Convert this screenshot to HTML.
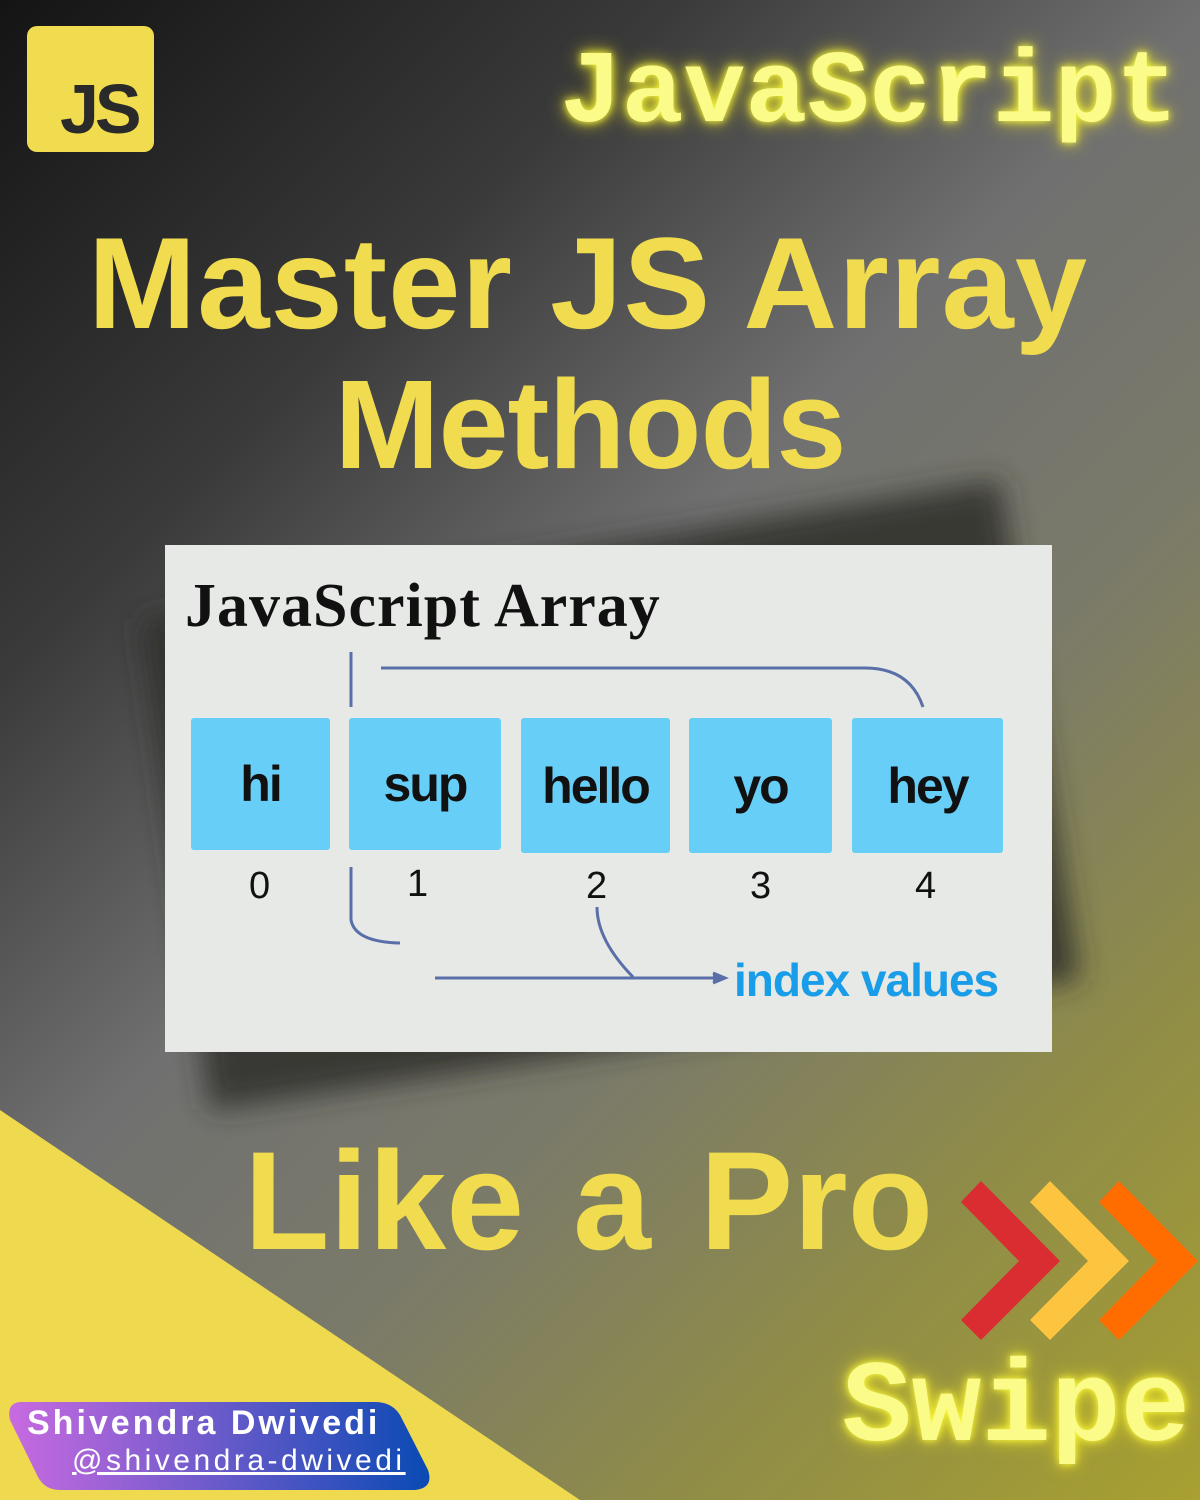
<!DOCTYPE html>
<html><head><meta charset="utf-8"><style>
body{margin:0;width:1200px;height:1500px;overflow:hidden;position:relative;font-family:"Liberation Sans",sans-serif;
background:linear-gradient(135deg,#141414 0%,#3a3a3a 25%,#707070 45%,#7a7a6a 62%,#8f8c48 80%,#a8a030 100%);}
.abs{position:absolute}
.y{color:#f0dc4e;font-weight:bold;letter-spacing:1px}
.glow{color:#fbfb8a;text-shadow:0 0 8px #ffff40,0 0 18px #e8e020;font-family:"Liberation Mono",monospace;font-weight:bold}
.box{position:absolute;background:#67cff7;border-radius:3px;display:flex;align-items:center;justify-content:center;font-weight:bold;font-size:50px;color:#111;letter-spacing:-2px}
.n{position:absolute;font-size:38px;color:#111}
</style></head><body>
<svg class="abs" style="left:0;top:0" width="1200" height="1500">
<polygon points="0,1110 580,1500 0,1500" fill="#efd94e"/>
<g filter="url(#b)"><polygon points="140,620 1000,480 1080,980 210,1110" fill="#2e2e2a" opacity=".85"/></g>
<defs><filter id="b"><feGaussianBlur stdDeviation="14"/></filter>
<linearGradient id="g" x1="0" x2="1"><stop offset="0" stop-color="#c86ae0"/><stop offset="1" stop-color="#0a4ab4"/></linearGradient></defs>
<polygon points="961,1202 981,1181 1060,1261 981,1340 961,1320 1019,1261" fill="#d92d32"/>
<polygon points="1030,1202 1050,1181 1129,1261 1050,1340 1030,1320 1088,1261" fill="#fdc43f"/>
<polygon points="1099,1202 1119,1181 1198,1261 1119,1340 1099,1320 1157,1261" fill="#ff6d00"/>
<path d="M22,1402 L375,1402 Q392,1402 400,1415 L428,1470 Q434,1488 415,1490 L60,1490 Q45,1490 38,1477 L10,1420 Q6,1402 22,1402Z" fill="url(#g)"/>
</svg>
<div class="abs" style="left:27px;top:26px;width:127px;height:126px;background:#f0dc4e;border-radius:10px"></div>
<div class="abs" style="left:60px;top:74px;font-size:70px;font-weight:bold;color:#2a2a2a;letter-spacing:-4px;line-height:1">JS</div>
<div class="abs glow" style="left:560px;top:32px;font-size:103px;line-height:1.2">JavaScript</div>
<div class="abs y" style="left:68px;top:212px;font-size:130px;line-height:1.1;width:1040px;text-align:center">Master JS Array</div>
<div class="abs y" style="left:70px;top:356px;font-size:126px;line-height:1.1;width:1040px;text-align:center;letter-spacing:-1px">Methods</div>
<div class="abs" style="left:165px;top:545px;width:887px;height:507px;background:#e7e9e7">
<div class="abs" style="left:20px;top:26px;font-family:'Liberation Serif',serif;font-weight:bold;font-size:62px;color:#111;letter-spacing:1px">JavaScript Array</div>
<svg class="abs" style="left:0;top:0" width="887" height="507" fill="none" stroke="#5a6ea8" stroke-width="3">
<path d="M186,107 V162"/><path d="M216,123 H700 Q745,123 758,162"/>
<path d="M186,322 V375 Q190,397 235,398"/><path d="M432,362 Q432,395 468,432"/>
<path d="M270,433 H555"/><path d="M548,428 L560,433 L548,438" fill="#5a6ea8"/>
</svg>
<div class="box" style="left:26px;top:173px;width:139px;height:132px">hi</div>
<div class="box" style="left:184px;top:173px;width:152px;height:132px">sup</div>
<div class="box" style="left:356px;top:173px;width:149px;height:135px">hello</div>
<div class="box" style="left:524px;top:173px;width:143px;height:135px">yo</div>
<div class="box" style="left:687px;top:173px;width:151px;height:135px">hey</div>
<div class="n" style="left:84px;top:320px">0</div><div class="n" style="left:242px;top:318px">1</div>
<div class="n" style="left:421px;top:320px">2</div><div class="n" style="left:585px;top:320px">3</div>
<div class="n" style="left:750px;top:320px">4</div>
<div class="abs" style="left:569px;top:408px;font-size:46px;font-weight:bold;color:#1a9de8;letter-spacing:-1px">index values</div>
</div>
<div class="abs y" style="left:244px;top:1124px;font-size:140px;line-height:1.1;letter-spacing:0;word-spacing:10px">Like a Pro</div>
<div class="abs glow" style="left:842px;top:1346px;font-size:116px;line-height:1.1">Swipe</div>
<div class="abs" style="left:27px;top:1404px;font-size:34px;font-weight:bold;color:#fff;letter-spacing:3px">Shivendra Dwivedi</div>
<div class="abs" style="left:72px;top:1444px;font-size:30px;color:#fff;letter-spacing:3.5px;text-decoration:underline">@shivendra-dwivedi</div>
</body></html>
